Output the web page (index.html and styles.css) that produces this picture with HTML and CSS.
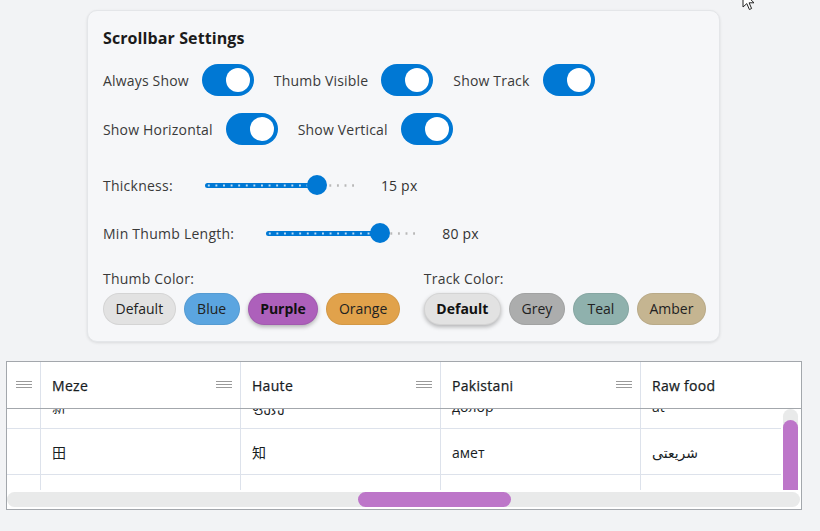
FILE: index.html
```html
<!DOCTYPE html>
<html lang="en">
<head>
<meta charset="utf-8">
<title>Scrollbar Settings</title>
<link rel="stylesheet" href="styles.css">
</head>
<body>
<div class="card">
  <div class="title">Scrollbar Settings</div>
  <div class="toggles r1">
    <div class="opt"><span class="olabel">Always Show</span><span class="switch"><span class="knob"></span></span></div>
    <div class="opt"><span class="olabel">Thumb Visible</span><span class="switch"><span class="knob"></span></span></div>
    <div class="opt"><span class="olabel">Show Track</span><span class="switch"><span class="knob"></span></span></div>
  </div>
  <div class="toggles r2">
    <div class="opt"><span class="olabel">Show Horizontal</span><span class="switch"><span class="knob"></span></span></div>
    <div class="opt"><span class="olabel">Show Vertical</span><span class="switch"><span class="knob"></span></span></div>
  </div>
  <div class="slider-row s1">
    <span class="slabel">Thickness:</span>
    <div class="slider"><div class="track"></div><div class="fill" style="width:74%"></div><div class="thumb" style="left:calc(74% - 10px)"></div></div>
    <span class="val">15 px</span>
  </div>
  <div class="slider-row s2">
    <span class="slabel">Min Thumb Length:</span>
    <div class="slider"><div class="track"></div><div class="fill" style="width:75%"></div><div class="thumb" style="left:calc(75% - 10px)"></div></div>
    <span class="val">80 px</span>
  </div>
  <div class="colors">
    <div class="cgroup">
      <div class="clabel">Thumb Color:</div>
      <div class="chips">
        <span class="chip ch-default">Default</span>
        <span class="chip ch-blue">Blue</span>
        <span class="chip ch-purple sel">Purple</span>
        <span class="chip ch-orange">Orange</span>
      </div>
    </div>
    <div class="cgroup">
      <div class="clabel">Track Color:</div>
      <div class="chips">
        <span class="chip ch-default sel">Default</span>
        <span class="chip ch-grey">Grey</span>
        <span class="chip ch-teal">Teal</span>
        <span class="chip ch-amber">Amber</span>
      </div>
    </div>
  </div>
</div>

<div class="grid">
  <div class="ghead">
    <div class="hc c0"><svg class="menu" width="16" height="8" viewBox="0 0 16 8"><path d="M0 .5H16M0 3.5H16M0 6.5H16" stroke="#9a9a9a" stroke-width="1"/></svg></div>
    <div class="hc col"><span class="htext">Meze</span><svg class="menu" width="16" height="8" viewBox="0 0 16 8"><path d="M0 .5H16M0 3.5H16M0 6.5H16" stroke="#9a9a9a" stroke-width="1"/></svg></div>
    <div class="hc col"><span class="htext">Haute</span><svg class="menu" width="16" height="8" viewBox="0 0 16 8"><path d="M0 .5H16M0 3.5H16M0 6.5H16" stroke="#9a9a9a" stroke-width="1"/></svg></div>
    <div class="hc col"><span class="htext">Pakistani</span><svg class="menu" width="16" height="8" viewBox="0 0 16 8"><path d="M0 .5H16M0 3.5H16M0 6.5H16" stroke="#9a9a9a" stroke-width="1"/></svg></div>
    <div class="hc col last"><span class="htext">Raw food</span></div>
  </div>
  <div class="gbody">
    <div class="rows">
      <div class="rows-inner">
        <div class="row">
          <div class="cell c0"></div>
          <div class="cell col">新</div>
          <div class="cell col">ფუჯე</div>
          <div class="cell col">долор</div>
          <div class="cell col last">at</div>
        </div>
        <div class="row">
          <div class="cell c0"></div>
          <div class="cell col">田</div>
          <div class="cell col">知</div>
          <div class="cell col">амет</div>
          <div class="cell col last"><span dir="rtl">شریعتی</span></div>
        </div>
        <div class="row">
          <div class="cell c0"></div>
          <div class="cell col">言</div>
          <div class="cell col">ipsum</div>
          <div class="cell col">сит</div>
          <div class="cell col last">lorem</div>
        </div>
      </div>
    </div>
    <div class="vbar"><div class="vtrack"><div class="vthumb"></div></div></div>
  </div>
  <div class="hbar"><div class="htrack"><div class="hthumb"></div></div></div>
</div>

<svg class="cursor" width="14" height="20" viewBox="0 0 14 20"><path d="M1 1V16L4.8 12.6L7.4 18.5L9.6 17.5L7.1 11.8H12Z" fill="#fff" stroke="#222" stroke-width="1" stroke-linejoin="round"/></svg>
</body>
</html>
```

FILE: styles.css
```css
html, body {
  margin: 0;
  padding: 0;
}
body {
  background: #f2f3f5;
  font-family: "Open Sans", "Noto Sans", "Noto Sans CJK SC", sans-serif;
  color: #333;
  width: 820px;
  height: 531px;
  overflow: hidden;
  position: relative;
}

.card {
  margin: 10px 0 0 87px;
  width: 633px;
  box-sizing: border-box;
  padding: 15px 16px 16px 15px;
  background: #f6f7f9;
  border: 1px solid #e4e6e9;
  border-radius: 10px;
  box-shadow: 0 1px 3px rgba(0, 0, 0, 0.10);
  display: flex;
  flex-direction: column;
}

.title {
  font-size: 16px;
  font-weight: 700;
  line-height: 24px;
  height: 24px;
  color: #1b1b1b;
  margin-bottom: 14px;
  letter-spacing: 0.1px;
}

.toggles {
  display: flex;
  align-items: center;
  gap: 20px;
  height: 32px;
}
.toggles.r1 { margin-bottom: 17px; }
.toggles.r2 { margin-bottom: 24px; }

.opt {
  display: flex;
  align-items: center;
  gap: 13px;
}
.olabel {
  font-size: 14px;
  color: #3a3a3a;
  white-space: nowrap;
  letter-spacing: 0.18px;
}
.switch {
  width: 52px;
  height: 32px;
  border-radius: 16px;
  background: #0078d4;
  display: flex;
  align-items: center;
  justify-content: flex-end;
  padding: 0 4px;
  box-sizing: border-box;
}
.knob {
  width: 24px;
  height: 24px;
  border-radius: 50%;
  background: #fff;
}

.slider-row {
  display: flex;
  align-items: center;
  height: 32px;
}
.slider-row.s1 { margin-bottom: 16px; }
.slider-row.s2 { margin-bottom: 20px; }
.slabel {
  font-size: 14px;
  color: #3a3a3a;
  margin-right: 32px;
  white-space: nowrap;
  letter-spacing: 0.25px;
}
.slider {
  position: relative;
  width: 152px;
  height: 20px;
  display: flex;
  align-items: center;
  margin-right: 24px;
}
.track {
  width: 100%;
  height: 5px;
  background-image: radial-gradient(circle, #b8b8b8 0 1px, transparent 1.4px);
  background-size: 7.6px 5px;
  background-position: 0 0;
}
.fill {
  position: absolute;
  left: 0;
  top: 7.5px;
  height: 5px;
  border-radius: 3px;
  background-color: #0078d4;
  background-image: radial-gradient(circle, rgba(255, 255, 255, 0.75) 0 0.9px, transparent 1.3px);
  background-size: 7.6px 5px;
}
.thumb {
  position: absolute;
  top: 0;
  width: 20px;
  height: 20px;
  border-radius: 50%;
  background: #0078d4;
}
.val {
  font-size: 14px;
  color: #333;
  letter-spacing: 0.2px;
}

.colors {
  display: flex;
  gap: 24px;
}
.cgroup {
  display: flex;
  flex-direction: column;
  gap: 4px;
}
.clabel {
  font-size: 14px;
  line-height: 20px;
  color: #3a3a3a;
  letter-spacing: 0.2px;
}
.chips {
  display: flex;
  gap: 8px;
}
.chip {
  height: 32px;
  min-width: 56px;
  text-align: center;
  box-sizing: border-box;
  padding: 0 11.5px;
  border-radius: 16px;
  font-size: 14px;
  line-height: 30px;
  color: #222;
  border: 1px solid rgba(0, 0, 0, 0.06);
}
.chip.sel {
  font-weight: 700;
  color: #111;
  box-shadow: 0 2px 4px rgba(0, 0, 0, 0.28);
}
.ch-default { background: #e2e2e2; }
.ch-blue { background: #5ba5e0; }
.ch-purple { background: #ad60bb; }
.ch-orange { background: #e1a24b; }
.ch-grey { background: #acadad; }
.ch-teal { background: #8fb1ad; }
.ch-amber { background: #c5b591; }

/* grid */
.grid {
  margin: 19px 0 0 6px;
  width: 796px;
  height: 149px;
  box-sizing: border-box;
  border: 1px solid #a3a7ac;
  background: #fff;
  display: flex;
  flex-direction: column;
  overflow: hidden;
  font-size: 14px;
  color: #181d1f;
}
.ghead {
  display: flex;
  height: 47px;
  flex: none;
  box-sizing: border-box;
  border-bottom: 1px solid #a3a7ac;
}
.hc {
  box-sizing: border-box;
  display: flex;
  align-items: center;
  border-right: 1px solid #dde2eb;
  height: 100%;
  flex: none;
}
.c0 {
  width: 34px;
  justify-content: center;
  padding-left: 1px;
}
.col {
  width: 200px;
  padding: 0 8px 0 11px;
  justify-content: space-between;
}
.col.last {
  width: 160px;
  border-right: none;
}
.htext {
  font-weight: 500;
  font-size: 14px;
  color: #181d1f;
  letter-spacing: 0.3px;
  -webkit-text-stroke: 0.25px #181d1f;
}
.menu { display: block; }

.gbody {
  display: flex;
  height: 81px;
  flex: none;
  overflow: hidden;
}
.rows {
  width: 774px;
  flex: none;
  overflow: hidden;
}
.rows-inner {
  margin-top: -26px;
}
.row {
  display: flex;
  height: 46px;
  box-sizing: border-box;
  border-bottom: 1px solid #dde2eb;
}
.cell {
  box-sizing: border-box;
  height: 100%;
  display: flex;
  align-items: center;
  border-right: 1px solid #dde2eb;
  flex: none;
  font-family: "Open Sans", "Noto Sans", "Noto Sans CJK SC", "DejaVu Sans", sans-serif;
  font-size: 14px;
  color: #181d1f;
  padding-top: 1px;
}
.cell.col { justify-content: flex-start; }
.vbar {
  width: 20px;
  flex: none;
  box-sizing: border-box;
  padding: 0 3px 0 2px;
}
.vtrack {
  height: 140px;
  background: #e9eaea;
  border-radius: 8px;
  padding-top: 11px;
  box-sizing: border-box;
}
.vthumb {
  height: 110px;
  background: #bd76c9;
  border-radius: 8px;
}
.hbar {
  height: 19px;
  flex: none;
  box-sizing: border-box;
  padding: 2px 1px 2px 0;
}
.htrack {
  height: 15px;
  background: #e9eaea;
  border-radius: 8px;
  display: flex;
}
.hthumb {
  margin-left: 351px;
  width: 153px;
  height: 15px;
  background: #bd76c9;
  border-radius: 8px;
}

.cursor {
  position: absolute;
  left: 742px;
  top: -9px;
}
```
